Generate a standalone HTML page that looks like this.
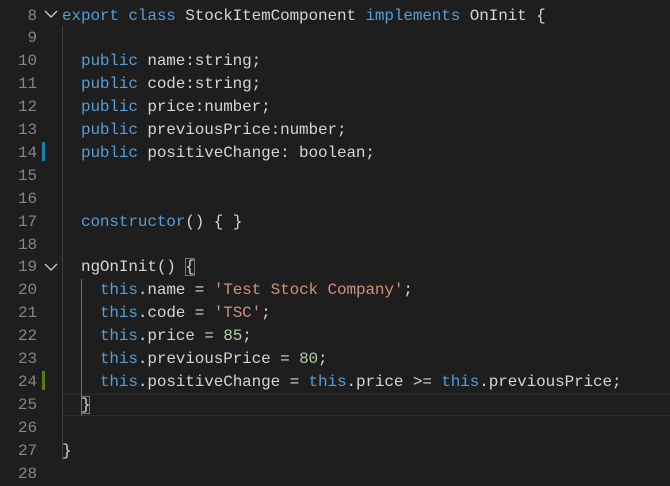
<!DOCTYPE html>
<html><head><style>
html,body{margin:0;padding:0;background:#1e1e1e;width:670px;height:479px;overflow:hidden}
.l{position:absolute;left:0;height:23px;line-height:23px;font-family:"Liberation Mono",monospace;font-size:16px;color:#d4d4d4;white-space:pre;letter-spacing:-0.12px}
.n{position:absolute;left:0;width:37px;text-align:right;color:#858585}
.c{position:absolute;left:62px}
.k{color:#569cd6}.s{color:#ce9178}.m{color:#b5cea8}
.g{position:absolute;width:1px;background:#404040}
.cur{position:absolute;left:62px;right:0;top:394px;height:20px;border:1px solid #2c2c2c;border-right:none}
.bar{position:absolute;left:42px;width:3px;height:19px}
.chev{position:absolute;left:44px;width:14px;height:10px}
.br{outline:1px solid #777;outline-offset:-1px}
</style></head><body>
<div class="cur"></div>
<div class="g" style="left:62px;top:26px;height:435px"></div>
<div class="g" style="left:81px;top:279px;height:137px;background:#707070"></div>
<div class="bar" style="top:142px;background:#1b81a8"></div>
<div class="bar" style="top:371px;background:#587c0c"></div>
<svg class="chev" style="top:9px" viewBox="0 0 14 10"><path d="M1 2 L7 8 L13 2" fill="none" stroke="#c5c5c5" stroke-width="1.4"/></svg>
<svg class="chev" style="top:262px" viewBox="0 0 14 10"><path d="M1 2 L7 8 L13 2" fill="none" stroke="#c5c5c5" stroke-width="1.4"/></svg>

<div class="l" style="top:4.5px"><span class="n">8</span><span class="c"><span class="k">export</span> <span class="k">class</span> StockItemComponent <span class="k">implements</span> OnInit {</span></div>
<div class="l" style="top:27.4px"><span class="n">9</span></div>
<div class="l" style="top:50.3px"><span class="n">10</span><span class="c">  <span class="k">public</span> name:string;</span></div>
<div class="l" style="top:73.2px"><span class="n">11</span><span class="c">  <span class="k">public</span> code:string;</span></div>
<div class="l" style="top:96.1px"><span class="n">12</span><span class="c">  <span class="k">public</span> price:number;</span></div>
<div class="l" style="top:119px"><span class="n">13</span><span class="c">  <span class="k">public</span> previousPrice:number;</span></div>
<div class="l" style="top:141.9px"><span class="n">14</span><span class="c">  <span class="k">public</span> positiveChange: boolean;</span></div>
<div class="l" style="top:164.8px"><span class="n">15</span></div>
<div class="l" style="top:187.7px"><span class="n">16</span></div>
<div class="l" style="top:210.6px"><span class="n">17</span><span class="c">  <span class="k">constructor</span>() { }</span></div>
<div class="l" style="top:233.5px"><span class="n">18</span></div>
<div class="l" style="top:256.4px"><span class="n">19</span><span class="c">  ngOnInit() <span class="br">{</span></span></div>
<div class="l" style="top:279.3px"><span class="n">20</span><span class="c">    <span class="k">this</span>.name = <span class="s">'Test Stock Company'</span>;</span></div>
<div class="l" style="top:302.2px"><span class="n">21</span><span class="c">    <span class="k">this</span>.code = <span class="s">'TSC'</span>;</span></div>
<div class="l" style="top:325.1px"><span class="n">22</span><span class="c">    <span class="k">this</span>.price = <span class="m">85</span>;</span></div>
<div class="l" style="top:348px"><span class="n">23</span><span class="c">    <span class="k">this</span>.previousPrice = <span class="m">80</span>;</span></div>
<div class="l" style="top:370.9px"><span class="n">24</span><span class="c">    <span class="k">this</span>.positiveChange = <span class="k">this</span>.price &gt;= <span class="k">this</span>.previousPrice;</span></div>
<div class="l" style="top:393.8px"><span class="n">25</span><span class="c">  <span class="br">}</span></span></div>
<div class="l" style="top:416.7px"><span class="n">26</span></div>
<div class="l" style="top:439.6px"><span class="n">27</span><span class="c">}</span></div>
<div class="l" style="top:462.5px"><span class="n">28</span></div>
</body></html>
